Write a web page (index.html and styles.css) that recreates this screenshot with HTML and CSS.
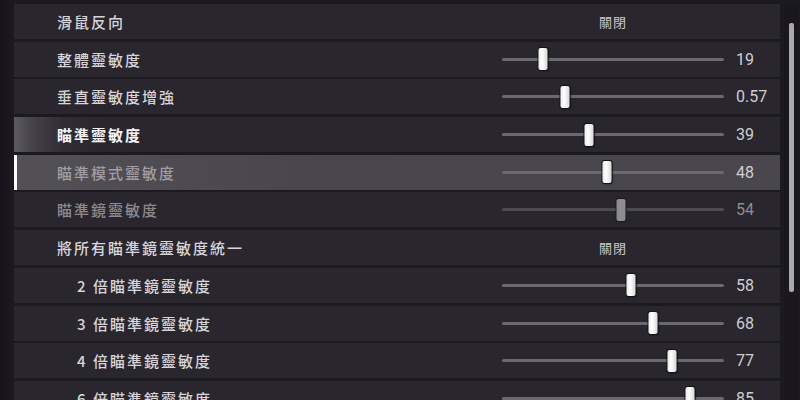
FILE: index.html
```html
<!DOCTYPE html>
<html lang="zh-Hant">
<head>
<meta charset="utf-8">
<title>靈敏度設定</title>
<link rel="stylesheet" href="styles.css">
</head>
<body>
<div class="screen">
  <div class="list">
    <div class="row">
      <div class="label">滑鼠反向</div>
      <div class="toggle">關閉</div>
    </div>
    <div class="row">
      <div class="label">整體靈敏度</div>
      <div class="slider"><div class="track"></div><div class="thumb" style="left:18.5%"></div></div>
      <div class="value">19</div>
    </div>
    <div class="row">
      <div class="label">垂直靈敏度增強</div>
      <div class="slider"><div class="track"></div><div class="thumb" style="left:28.5%"></div></div>
      <div class="value">0.57</div>
    </div>
    <div class="row row-hover">
      <div class="label">瞄準靈敏度</div>
      <div class="slider"><div class="track"></div><div class="thumb" style="left:39%"></div></div>
      <div class="value">39</div>
    </div>
    <div class="row row-selected">
      <div class="label">瞄準模式靈敏度</div>
      <div class="slider"><div class="track"></div><div class="thumb" style="left:47.5%"></div></div>
      <div class="value">48</div>
    </div>
    <div class="row row-disabled">
      <div class="label">瞄準鏡靈敏度</div>
      <div class="slider"><div class="track"></div><div class="thumb" style="left:53.5%"></div></div>
      <div class="value">54</div>
    </div>
    <div class="row">
      <div class="label">將所有瞄準鏡靈敏度統一</div>
      <div class="toggle">關閉</div>
    </div>
    <div class="row">
      <div class="label sub">2 倍瞄準鏡靈敏度</div>
      <div class="slider"><div class="track"></div><div class="thumb" style="left:58%"></div></div>
      <div class="value">58</div>
    </div>
    <div class="row">
      <div class="label sub">3 倍瞄準鏡靈敏度</div>
      <div class="slider"><div class="track"></div><div class="thumb" style="left:68%"></div></div>
      <div class="value">68</div>
    </div>
    <div class="row">
      <div class="label sub">4 倍瞄準鏡靈敏度</div>
      <div class="slider"><div class="track"></div><div class="thumb" style="left:76.5%"></div></div>
      <div class="value">77</div>
    </div>
    <div class="row">
      <div class="label sub">6 倍瞄準鏡靈敏度</div>
      <div class="slider"><div class="track"></div><div class="thumb" style="left:84.5%"></div></div>
      <div class="value">85</div>
    </div>
  </div>
  <div class="scroll"><div class="scroll-thumb"></div></div>
</div>
</body>
</html>
```
FILE: styles.css
```css
* { box-sizing: border-box; }
html, body {
  margin: 0;
  padding: 0;
  width: 800px;
  height: 400px;
  overflow: hidden;
  background: #1b1920;
}
.screen {
  display: flex;
  align-items: flex-start;
  padding: 4px 0 0 14px;
  height: 400px;
  background: linear-gradient(90deg, #151318 0, #1c1a21 14px, #1c1a21 100%);
}
.list {
  width: 766px;
  display: flex;
  flex-direction: column;
  gap: 2.7px;
}
.row {
  height: 35px;
  display: flex;
  align-items: center;
  background: #29262e;
  font-family: "Noto Sans CJK TC", "Noto Sans CJK SC", sans-serif;
  color: #d6d5d8;
}
.label {
  flex: 0 0 488px;
  padding-left: 43px;
  font-size: 15px;
  font-weight: 500;
  letter-spacing: 2px;
  white-space: nowrap;
}
.label.sub {
  padding-left: 63px;
}
.toggle {
  width: 222px;
  text-align: center;
  font-size: 13px;
  letter-spacing: 1px;
  color: #c9c8cc;
}
.slider {
  position: relative;
  width: 222px;
  height: 24px;
  display: flex;
  align-items: center;
}
.track {
  width: 100%;
  height: 3px;
  border-radius: 2px;
  background: #6b6970;
}
.thumb {
  position: absolute;
  top: 1px;
  width: 9px;
  height: 22px;
  transform: translateX(-50%);
  border-radius: 2px;
  background: linear-gradient(90deg, #e8e8e8, #ffffff 40%, #d6d6d6);
  box-shadow: 0 0 0 1px #141217, 1px 1px 2px rgba(0,0,0,0.6);
}
.value {
  margin-left: 12px;
  font-family: Roboto, "Liberation Sans", sans-serif;
  font-size: 16px;
  color: #cfced2;
}
.row-hover {
  background: linear-gradient(90deg, #5d5b60 0, #45424a 18px, #2f2c34 50px, #29262e 90px);
}
.row-hover .label {
  color: #f4f4f6;
  font-weight: 700;
}
.row-selected {
  background: linear-gradient(90deg, #ffffff 0, #ffffff 3px, #535056 3px, #48454c 40%, #49464d 100%);
}
.row-selected .label {
  color: #a09ea3;
}
.row-disabled .label {
  color: #8c8a8f;
}
.row-disabled .track {
  background: #4d4b52;
}
.row-disabled .thumb {
  background: #8d8c8f;
  box-shadow: 0 0 0 1px #1c1a1f;
}
.row-disabled .value {
  color: #8e8d91;
}
.scroll {
  margin-left: 4px;
  width: 14px;
  height: 396px;
  display: flex;
  justify-content: center;
  padding-top: 19px;
  background: #19171d;
}
.scroll-thumb {
  width: 5px;
  height: 269px;
  border-radius: 2px;
  background: #a9a8ad;
}
```
